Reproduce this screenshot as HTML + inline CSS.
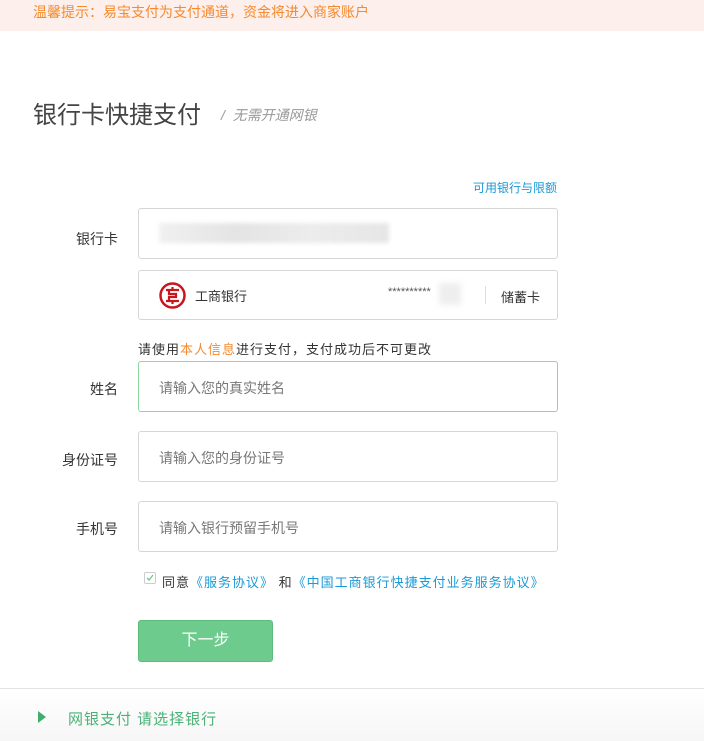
<!DOCTYPE html>
<html><head><meta charset="utf-8"><style>
*{margin:0;padding:0;box-sizing:border-box}
body{width:704px;height:741px;background:#fff;font-family:"Liberation Sans","Noto Sans CJK SC",sans-serif;position:relative;overflow:hidden;color:#333}
.a{position:absolute;white-space:nowrap}
.tip{left:0;top:0;width:704px;height:31px;background:#fdefec;color:#f58a2e;font-size:14px;line-height:24px;padding-left:33px}
.inp{position:absolute;left:138px;width:420px;border:1px solid #d6d6d6;border-radius:3px;background:#fff}
.lbl{font-size:14px;color:#333;text-align:right;width:80px;left:38px}
.ph{font-size:14px;color:#777;left:20px;top:16px}
</style></head><body>
<div class="a tip">温馨提示：易宝支付为支付通道，资金将进入商家账户</div>
<div class="a" style="left:33px;top:95px;font-size:24px;color:#444">银行卡快捷支付</div>
<div class="a" style="left:221px;top:105px;font-size:14px;color:#999;font-style:italic">/&nbsp; 无需开通网银</div>
<div class="a" style="left:473px;top:179px;font-size:12px;color:#1a9ad6">可用银行与限额</div>

<div class="a lbl" style="top:229px">银行卡</div>
<div class="inp" style="top:208px;height:51px"><div class="a" style="left:20px;top:14px;width:230px;height:20px;background:linear-gradient(90deg,#f0f0f0,#e4e4e4,#ececec,#e6e6e6);filter:blur(2px)"></div></div>
<div class="inp" style="top:270px;height:50px">
<svg class="a" style="left:20px;top:11px" width="27" height="27" viewBox="0 0 27 27"><circle cx="13.5" cy="13.5" r="12" fill="none" stroke="#c8161d" stroke-width="2.5"/><path d="M7 8h13M7 19h13M10 8v4h7v3h-7v4M13.5 5v3M13.5 19v3" fill="none" stroke="#c8161d" stroke-width="2.2"/></svg>
<div class="a" style="left:56px;top:15px;font-size:13px;color:#333">工商银行</div>
<div class="a" style="left:249px;top:15px;font-size:11px;color:#555">**********</div>
<div class="a" style="left:300px;top:12px;width:22px;height:22px;background:#eee;filter:blur(3px)"></div>
<div class="a" style="left:346px;top:15px;width:1px;height:18px;background:#ddd"></div>
<div class="a" style="left:362px;top:16px;font-size:13px;color:#333">储蓄卡</div>
</div>

<div class="a" style="left:138px;top:339px;font-size:13px;color:#333;letter-spacing:1px">请使用<span style="color:#f58a2e">本人信息</span>进行支付，支付成功后不可更改</div>

<div class="a lbl" style="top:379px">姓名</div>
<div class="inp" style="top:361px;height:51px;border-color:#8fd79f"><div class="a ph">请输入您的真实姓名</div></div>
<div class="a lbl" style="top:450px">身份证号</div>
<div class="inp" style="top:431px;height:51px"><div class="a ph">请输入您的身份证号</div></div>
<div class="a lbl" style="top:519px">手机号</div>
<div class="inp" style="top:501px;height:51px"><div class="a ph">请输入银行预留手机号</div></div>

<div class="a" style="left:144px;top:572px;width:12px;height:12px;border:1px solid #ccc;border-radius:2px"><svg width="10" height="10" style="position:absolute;left:0;top:0"><path d="M2 5l2 2 4-5" stroke="#6cc98c" fill="none" stroke-width="1.3"/></svg></div>
<div class="a" style="left:162px;top:572px;font-size:13px;color:#333;letter-spacing:1px">同意<span style="color:#1a9ad6">《服务协议》</span> 和<span style="color:#1a9ad6">《中国工商银行快捷支付业务服务协议》</span></div>

<div class="a" style="left:138px;top:620px;width:135px;height:42px;background:#6ecb8e;border:1px solid #5bbd7c;border-radius:3px;color:#fff;font-size:16px;text-align:center;line-height:40px">下一步</div>

<div class="a" style="left:0;top:688px;width:704px;height:53px;border-top:1px solid #e3e3e3;background:linear-gradient(#fff,#f6f6f6)"></div>
<div class="a" style="left:38px;top:711px;width:0;height:0;border-left:8px solid #3fae6c;border-top:6px solid transparent;border-bottom:6px solid transparent"></div>
<div class="a" style="left:68px;top:708px;font-size:15px;color:#4bb177;letter-spacing:1px">网银支付 请选择银行</div>
</body></html>
